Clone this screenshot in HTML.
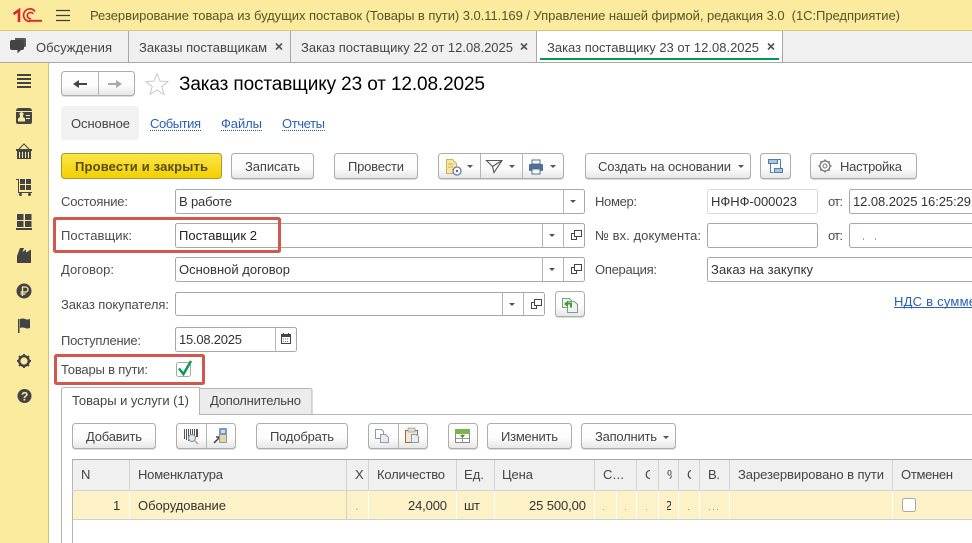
<!DOCTYPE html>
<html lang="ru"><head><meta charset="utf-8"><title>Заказ поставщику 23</title>
<style>
html,body{margin:0;padding:0;background:#fff;overflow:hidden;width:972px;height:543px}
svg{display:block}
text{font-family:"Liberation Sans",Arial,sans-serif;font-size:13px;fill:#4b4b4b;white-space:pre}
.v{fill:#333}
.h{fill:#5a5226}
.t{fill:#444}
.lnk{fill:#2a5fb8}
.btn{fill:url(#g);stroke:#adadad;filter:drop-shadow(0 1px 0 rgba(0,0,0,.14))}
.fld{fill:#fff;stroke:#a8a8a8}
.sep{stroke:#b5b5b5;stroke-width:1}
.i{fill:#444}
.car{fill:#555}
</style></head><body>
<svg xmlns="http://www.w3.org/2000/svg" width="972" height="543" viewBox="0 0 972 543">
<defs>
<linearGradient id="g" x1="0" y1="0" x2="0" y2="1"><stop offset="0" stop-color="#fff"/><stop offset=".6" stop-color="#fbfbfb"/><stop offset="1" stop-color="#e6e6e6"/></linearGradient>
<linearGradient id="y" x1="0" y1="0" x2="0" y2="1"><stop offset="0" stop-color="#fbe74a"/><stop offset="1" stop-color="#f2cf00"/></linearGradient>
<clipPath id="c1"><rect x="640" y="465" width="10" height="20"/></clipPath>
<clipPath id="c2"><rect x="660" y="465" width="12" height="20"/></clipPath>
<clipPath id="c3"><rect x="680" y="465" width="11" height="20"/></clipPath>
<clipPath id="c4"><rect x="667" y="498" width="4" height="16"/></clipPath>
</defs>
<rect width="972" height="543" fill="#fff"/>
<!-- header -->
<rect width="972" height="31" fill="#fbeb9f"/>
<rect y="30" width="972" height="1" fill="#d9c873"/>
<path d="M13.500 14L19 10.200V22" fill="none" stroke="#d8282c" stroke-width="2.600"/>
<path d="M35 11.500A6.300 6.300 0 1 0 30 21.500M33.200 13.800A3.200 3.200 0 1 0 31 18.800" fill="none" stroke="#d8282c" stroke-width="1.700"/>
<path d="M29 20.800h13" stroke="#d8282c" stroke-width="1.900"/>
<path d="M56 10.500h14M56 15.500h14M56 20.500h14" stroke="#3c3c3c" stroke-width="1.200"/>
<text x="90" y="20" class="h" textLength="810" xml:space="preserve">Резервирование товара из будущих поставок (Товары в пути) 3.0.11.169 / Управление нашей фирмой, редакция 3.0  (1С:Предприятие)</text>
<!-- tab bar -->
<rect y="31" width="972" height="31" fill="#f0f0f0"/>
<rect y="62" width="972" height="1" fill="#a8a8a8"/>
<rect x="537" y="31" width="245" height="31" fill="#fff"/>
<path d="M128.500 31v31M290.500 31v31M536.500 31v31M782.500 31v31" stroke="#a8a8a8"/>
<rect x="540" y="58" width="239" height="2" fill="#069a4f"/>
<path d="M15 38h9.500q1.500 0 1.500 1.500v6q0 1.500-1.500 1.500h-9.500z" fill="#555"/>
<path d="M12 40h10q2 0 2 2v6q0 2-2 2h-1l-3.500 3.500v-3.500h-5.500q-2 0-2-2v-6q0-2 2-2z" fill="#444"/>
<text x="36" y="52" class="t" textLength="76">Обсуждения</text>
<text x="139" y="52" class="t" textLength="128">Заказы поставщикам</text>
<text x="301" y="52" class="t" textLength="212">Заказ поставщику 22 от 12.08.2025</text>
<text x="547" y="52" class="t" textLength="212">Заказ поставщику 23 от 12.08.2025</text>
<path d="M276 43.500l6 6M282 43.500l-6 6M521 43.500l6 6M527 43.500l-6 6M768 43.500l6 6M774 43.500l-6 6" stroke="#555" stroke-width="1.600"/>
<!-- sidebar -->
<rect y="63" width="48" height="480" fill="#fbeb9f"/>
<rect x="48" y="63" width="1" height="480" fill="#cfc27a"/>
<path d="M17 74h14v2h-14zM17 78h14v2h-14zM17 82h14v2h-14zM17 86h14v2h-14z" class="i"/>
<path d="M19 108h10q3 0 3 3v11q0 2-2 2h-12q-2 0-2-2v-11q0-3 3-3z" class="i"/>
<path d="M16 111.500h16" stroke="#fbeb9f"/>
<path d="M20 115.500a2 2 0 1 1 3 0v1.500l2 1.500v3h-7v-3l2-1.500zM26 115h4v1h-4zM26 118h4v1h-4z" fill="#fbeb9f"/>
<path d="M16 149h16v2h-1v8h-14v-8h-1z" class="i"/>
<path d="M19 149l5-5 5 5" fill="none" stroke="#444"/>
<path d="M19.500 152v6M22.500 152v6M25.500 152v6M28.500 152v6" stroke="#fbeb9f"/>
<path d="M16 179h3v13h13v1h-14v-13h-2z" class="i"/>
<rect x="20" y="179" width="5" height="5" class="i"/><rect x="26" y="179" width="5" height="5" class="i"/><rect x="20" y="185" width="5" height="5" class="i"/><rect x="26" y="185" width="5" height="5" class="i"/>
<circle cx="20.500" cy="194.500" r="1.500" class="i"/><circle cx="29.500" cy="194.500" r="1.500" class="i"/>
<rect x="17" y="214" width="6.500" height="6" class="i"/><rect x="25" y="214" width="6.500" height="6" class="i"/><rect x="17" y="221" width="6.500" height="6" class="i"/><rect x="25" y="221" width="6.500" height="6" class="i"/><rect x="16" y="228" width="16" height="2" class="i"/>
<path d="M17 263v-7l3-8h4l-1.500 4 3.500-2.500v3l5-3v13.500z" class="i"/>
<circle cx="24" cy="291" r="7.500" class="i"/>
<path d="M22.500 296v-9h3a2.200 2.200 0 0 1 0 5h-5M20.500 294h5" fill="none" stroke="#fbeb9f" stroke-width="1.300"/>
<rect x="18" y="319" width="1.500" height="14" class="i"/>
<path d="M20 319q3-1 5 0t5 0v9q-3 1-5 0t-5 0z" class="i"/>
<circle cx="24" cy="361" r="4.800" fill="none" stroke="#444" stroke-width="2.400"/>
<path d="M24 354v14M17 361h14M19 356l10 10M29 356l-10 10" stroke="#444" stroke-width="2" stroke-dasharray="2.500 9"/>
<circle cx="24.500" cy="396" r="7" class="i"/>
<text x="21" y="400.500" style="font-size:12px;font-weight:bold;fill:#fbeb9f">?</text>
<!-- nav -->
<rect x="61.500" y="71.500" width="73" height="24" rx="3" class="btn"/>
<path d="M98.500 72v23" class="sep"/>
<path d="M73 84l6-4v3h8v2h-8v3z" fill="#444"/>
<path d="M122 84l-6-4v3h-8v2h8v3z" fill="#aaa"/>
<path d="M157 73.500l3 7.600 8 .4-6.200 5 2.100 7.900-6.900-4.400-6.900 4.400 2.100-7.900-6.200-5 8-.4z" fill="#fff" stroke="#c9c9c9"/>
<text x="179" y="90" style="font-size:19px;fill:#000" textLength="306">Заказ поставщику 23 от 12.08.2025</text>
<!-- page tabs -->
<rect x="61" y="106" width="78" height="34" rx="3" fill="#f2f2f2"/>
<text x="71" y="128" class="t" textLength="59">Основное</text>
<text x="150" y="128" class="lnk" textLength="51">События</text>
<text x="221" y="128" class="lnk" textLength="41">Файлы</text>
<text x="282" y="128" class="lnk" textLength="43">Отчеты</text>
<path d="M150 130.500h51M221 130.500h41M282 130.500h43" stroke="#2a5fb8" stroke-dasharray="1 1"/>
<!-- toolbar -->
<rect x="61.500" y="153.500" width="160" height="25" rx="3" fill="url(#y)" stroke="#b09a20"/>
<text x="75" y="171" style="font-weight:bold;fill:#5a4c10" textLength="133">Провести и закрыть</text>
<rect x="231.500" y="153.500" width="82" height="25" rx="3" class="btn"/>
<text x="245" y="171" class="t" textLength="55">Записать</text>
<rect x="334.500" y="153.500" width="83" height="25" rx="3" class="btn"/>
<text x="348" y="171" class="t" textLength="56">Провести</text>
<rect x="438.500" y="153.500" width="125" height="25" rx="3" class="btn"/>
<path d="M480.500 154v24M522.500 154v24" class="sep"/>
<path d="M446.500 159.500h6l4 4v10h-10z" fill="#f8e6a6" stroke="#d4b04e"/>
<path d="M448 164h5M448 167h5" stroke="#d4b04e"/>
<circle cx="457" cy="171" r="4" fill="#fff" stroke="#5a7fb5" stroke-width="1.300"/><circle cx="457" cy="171" r="1.200" fill="#d04040"/>
<path d="M467 165h6l-3 3zM509 165h6l-3 3zM550 165h6l-3 3z" class="car"/>
<path d="M486.500 160.500l15.500 0-8 12-1.500-6zM492.500 166.500l9.500-6" fill="none" stroke="#555" stroke-width="1.100"/>
<rect x="529" y="164" width="14" height="7" rx="1" fill="#4d7096"/>
<rect x="532" y="160" width="8" height="4" fill="#fff" stroke="#4d7096"/>
<rect x="532" y="169" width="8" height="5" fill="#fff" stroke="#4d7096"/>
<rect x="585.500" y="153.500" width="165" height="25" rx="3" class="btn"/>
<text x="598" y="171" class="t" textLength="133">Создать на основании</text>
<path d="M738 165h6l-3 3z" class="car"/>
<rect x="760.500" y="153.500" width="30" height="25" rx="3" class="btn"/>
<path d="M768.500 159.500h9v4h-9zM774.500 168.500h8v4h-8z" fill="#a8c4de" stroke="#4f7fa8"/>
<path d="M770.500 163.500v9h3M780.500 168.500v-9h-3" fill="none" stroke="#4f7fa8"/>
<rect x="810.500" y="153.500" width="106" height="25" rx="3" class="btn"/>
<circle cx="825" cy="166" r="5" fill="none" stroke="#777" stroke-width="1.300"/><circle cx="825" cy="166" r="2" fill="none" stroke="#777"/>
<path d="M825 159.500v13M818.500 166h13M820.400 161.400l9.200 9.200M829.600 161.400l-9.200 9.200" stroke="#777" stroke-width="1.500" stroke-dasharray="1.500 10"/>
<text x="840" y="171" class="t" textLength="62">Настройка</text>
<!-- fields -->
<text x="61" y="206" textLength="67">Состояние:</text>
<rect x="175.500" y="189.500" width="409" height="24" rx="2" class="fld"/>
<path d="M563.500 190v23" class="sep"/>
<path d="M570 200h6l-3 3z" class="car"/>
<text x="179" y="206" class="v" textLength="53">В работе</text>
<text x="61" y="240" textLength="71">Поставщик:</text>
<rect x="175.500" y="223.500" width="409" height="24" rx="2" class="fld"/>
<path d="M542.500 224v23M563.500 224v23" class="sep"/>
<path d="M549 234h6l-3 3z" class="car"/>
<text x="179" y="240" style="fill:#222" textLength="78">Поставщик 2</text>
<text x="61" y="274" textLength="53">Договор:</text>
<rect x="175.500" y="257.500" width="409" height="24" rx="2" class="fld"/>
<path d="M542.500 258v23M563.500 258v23" class="sep"/>
<path d="M549 268h6l-3 3z" class="car"/>
<text x="179" y="274" class="v" textLength="111">Основной договор</text>
<text x="61" y="309" textLength="108">Заказ покупателя:</text>
<rect x="175.500" y="292.500" width="369" height="23" rx="2" class="fld"/>
<path d="M502.500 293v22M523.500 293v22" class="sep"/>
<path d="M509 303h6l-3 3z" class="car"/>
<g fill="none" stroke="#444"><path d="M574.500 230.500h7v6h-7zM574 233.500h-2.500v6h5v-2.500"/><path d="M574.500 264.500h7v6h-7zM574 267.500h-2.500v6h5v-2.500"/><path d="M534.500 299.500h7v6h-7zM534 302.500h-2.500v6h5v-2.500"/></g>
<rect x="555.500" y="291.500" width="29" height="25" rx="3" class="btn"/>
<path d="M562.500 298.500h7l2 2v7h-9z" fill="#eef3ee" stroke="#7b9a9a"/><path d="M567.500 301.500h7l3 3v8h-10z" fill="#eef3ee" stroke="#7b9a9a"/>
<path d="M564 304l4-3.500v2h4v5h-2v-3h-2v2.500z" fill="#3fa021"/>
<text x="61" y="345" textLength="80">Поступление:</text>
<rect x="175.500" y="327.500" width="121" height="24" rx="2" class="fld"/>
<path d="M275.500 328v23" class="sep"/>
<text x="179" y="344" class="v" textLength="63">15.08.2025</text>
<path d="M281.500 334.500h9v9h-9z" fill="none" stroke="#444"/><path d="M281 334h10v3h-10zM283 333h1v2h-1zM288 333h1v2h-1z" fill="#444"/><path d="M283 339h6M283 341.500h6" stroke="#777" stroke-dasharray="1 1"/>
<text x="61" y="374" textLength="87">Товары в пути:</text>
<rect x="176.500" y="362.500" width="14" height="14" rx="2" class="fld"/>
<path d="M179 368.500l4.500 5.500 7.500-13" fill="none" stroke="#0a9a50" stroke-width="2.500"/>
<!-- right -->
<text x="595" y="206" textLength="42">Номер:</text>
<rect x="707.500" y="189.500" width="110" height="24" rx="2" fill="#fff" stroke="#dadada"/>
<text x="711" y="206" class="v" textLength="86">НФНФ-000023</text>
<text x="828" y="206" textLength="15">от:</text>
<rect x="849.500" y="189.500" width="130" height="24" rx="2" class="fld"/>
<text x="853" y="206" class="v" textLength="118">12.08.2025 16:25:29</text>
<text x="595" y="240" textLength="106">№ вх. документа:</text>
<rect x="707.500" y="223.500" width="110" height="24" rx="2" class="fld"/>
<text x="828" y="240" textLength="15">от:</text>
<rect x="849.500" y="223.500" width="130" height="24" rx="2" class="fld"/>
<rect x="863" y="238" width="1" height="2" fill="#c8a050"/><rect x="875" y="238" width="1" height="2" fill="#c8a050"/>
<text x="595" y="274" textLength="62">Операция:</text>
<rect x="707.500" y="257.500" width="280" height="24" rx="2" class="fld"/>
<text x="711" y="274" class="v" textLength="102">Заказ на закупку</text>
<text x="894" y="306" class="lnk" textLength="82">НДС в сумме</text>
<path d="M894 307.500h78" stroke="#2a5fb8"/>
<!-- red frames -->
<rect x="54.500" y="218.500" width="225" height="33" rx="1" fill="none" stroke="#d4574e" stroke-width="3"/>
<rect x="55.500" y="355.500" width="148" height="28" rx="1" fill="none" stroke="#d4574e" stroke-width="3"/>
<!-- tabs panel -->
<path d="M61.500 396V543M312 414.500H972" stroke="#b5b5b5" fill="none"/>
<path d="M61.500 414V390q0-2.500 2.500-2.500h135.500V414.500H312V390q0-1.500-2-1.500H199.500" fill="none" stroke="#b5b5b5"/>
<path d="M200 389h110q1.500 0 1.500 1.500V414H200z" fill="#ececec"/>
<text x="72" y="405" class="t" textLength="117">Товары и услуги (1)</text>
<text x="210" y="405" class="t" textLength="91">Дополнительно</text>
<!-- table toolbar -->
<rect x="72.500" y="423.500" width="83" height="25" rx="3" class="btn"/>
<text x="86" y="441" class="t" textLength="56">Добавить</text>
<rect x="176.500" y="423.500" width="59" height="25" rx="3" class="btn"/>
<path d="M206.500 424v24" class="sep"/>
<path d="M184.500 429v10M186.500 429v11M188.500 429v12M190.500 429v8M192.500 429v8M194.500 429v8M196.500 429v8M197.500 429v8" stroke="#555"/>
<circle cx="192" cy="438" r="3.500" fill="#dce8f2" stroke="#8a8a8a"/><path d="M195 441l3 3" stroke="#c8a060" stroke-width="1.500"/>
<path d="M214 443l6-6M216 437h4v4" stroke="#444" stroke-width="1.500" fill="none"/>
<rect x="219" y="428" width="8" height="15" rx="1" fill="#7a9ab8"/><rect x="221" y="430" width="4" height="3" fill="#bfe0f5"/><rect x="220" y="435" width="6" height="7" fill="#e6d89a"/>
<rect x="256.500" y="423.500" width="91" height="25" rx="3" class="btn"/>
<text x="270" y="441" class="t" textLength="64">Подобрать</text>
<rect x="368.500" y="423.500" width="59" height="25" rx="3" class="btn"/>
<path d="M398.500 424v24" class="sep"/>
<path d="M375.500 429.500h6l2 2v7h-8z" fill="#fff" stroke="#8b9bab"/><path d="M380.500 434.500h5l3 3v5h-8z" fill="#e6ecf2" stroke="#8b9bab"/>
<rect x="405.500" y="430.500" width="12" height="12" fill="#f5e6d0" stroke="#a5683a"/><rect x="408" y="428" width="7" height="4" fill="#ddd" stroke="#888" stroke-width=".6"/><path d="M411.500 434.500h5l2 2v6h-7z" fill="#e6ecf2" stroke="#8b9bab"/>
<rect x="448.500" y="423.500" width="29" height="25" rx="3" class="btn"/>
<rect x="455.500" y="429.500" width="14" height="13" fill="#fff" stroke="#888"/><rect x="455" y="429" width="15" height="5" fill="#79b64a"/><path d="M456 438.500h13M462.500 434v8" stroke="#999"/><path d="M460 435h5l-2.500 3z" fill="#3f9a21"/>
<rect x="487.500" y="423.500" width="84" height="25" rx="3" class="btn"/>
<text x="501" y="441" class="t" textLength="57">Изменить</text>
<rect x="581.500" y="423.500" width="94" height="25" rx="3" class="btn"/>
<text x="595" y="441" class="t" textLength="62">Заполнить</text>
<path d="M663 436h6l-3 3z" class="car"/>
<!-- table -->
<rect x="72" y="459" width="900" height="1" fill="#a8a8a8"/>
<rect x="72" y="460" width="900" height="31" fill="#f0f0f0"/>
<rect x="73" y="491" width="899" height="28" fill="#fdf1c8"/>
<rect x="72" y="519" width="900" height="1" fill="#d0d0d0"/>
<path d="M72.500 460V543" stroke="#b5b5b5"/>
<path d="M129.500 491v28M368.500 491v28M456.500 491v28M494.500 491v28M594.500 491v28M616.500 491v28M636.500 491v28M658.500 491v28M678.500 491v28M699.500 491v28M729.500 491v28M892.500 491v28" stroke="#fff"/>
<path d="M129.500 460v31M346.500 460v31M368.500 460v31M456.500 460v31M494.500 460v31M594.500 460v31M636.500 460v31M658.500 460v31M678.500 460v31M699.500 460v31M729.500 460v31M892.500 460v31" stroke="#d4d4d4"/>
<rect x="72" y="490" width="900" height="1" fill="#d4d4d4"/>
<path d="M346.500 491v28" stroke="#d0d0d0"/>
<text x="81" y="479" class="t">N</text>
<text x="138" y="479" class="t" textLength="85">Номенклатура</text>
<text x="355" y="479" class="t">Х</text>
<text x="377" y="479" class="t" textLength="68">Количество</text>
<text x="464" y="479" class="t" textLength="20">Ед.</text>
<text x="502" y="479" class="t" textLength="31">Цена</text>
<text x="603" y="479" class="t" textLength="21">С...</text>
<text x="645" y="479" class="t" clip-path="url(#c1)">С</text>
<text x="667" y="479" class="t" clip-path="url(#c2)">%</text>
<text x="687" y="479" class="t" clip-path="url(#c3)">С</text>
<text x="708" y="479" class="t" textLength="12">В.</text>
<text x="738" y="479" class="t" textLength="146">Зарезервировано в пути</text>
<text x="901" y="479" class="t" textLength="52">Отменен</text>
<text x="113" y="510" class="v">1</text>
<text x="138" y="510" class="v" textLength="88">Оборудование</text>
<text x="355" y="510" style="fill:#aaa">.</text>
<text x="408" y="510" class="v" textLength="39">24,000</text>
<text x="464" y="510" class="v" textLength="16">шт</text>
<text x="529" y="510" class="v" textLength="57">25 500,00</text>
<rect x="603" y="509" width="1" height="1" fill="#aaa"/><rect x="625" y="509" width="1" height="1" fill="#aaa"/><rect x="646" y="509" width="1" height="1" fill="#aaa"/>
<text x="665" y="510" class="v" clip-path="url(#c4)">2</text>
<rect x="688" y="509" width="1" height="1" fill="#888"/><path d="M709 509.500h10" stroke="#999" stroke-dasharray="1 3"/>
<rect x="902.500" y="498.500" width="13" height="13" rx="2" class="fld"/>
</svg>
</body></html>
